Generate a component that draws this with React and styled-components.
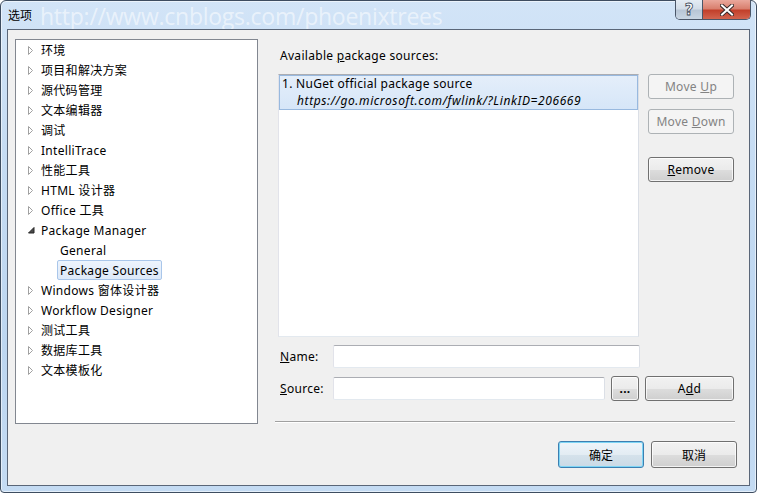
import React from 'react'
import styled, { createGlobalStyle, css } from 'styled-components'

const UI = '"Noto Sans", "Noto Sans CJK SC", sans-serif'

const GlobalStyle = createGlobalStyle`
  html, body { margin: 0; padding: 0; background: #fff; }
  body { font-family: ${UI}; font-size: 12px; letter-spacing: 0.3px; color: #000; }
  * { box-sizing: border-box; }
`

const treeItems = [
  { label: '环境' },
  { label: '项目和解决方案' },
  { label: '源代码管理' },
  { label: '文本编辑器' },
  { label: '调试' },
  { label: 'IntelliTrace' },
  { label: '性能工具' },
  { label: 'HTML 设计器' },
  { label: 'Office 工具' },
  { label: 'Package Manager', expanded: true },
  { label: 'General', depth: 1 },
  { label: 'Package Sources', depth: 1, selected: true },
  { label: 'Windows 窗体设计器' },
  { label: 'Workflow Designer' },
  { label: '测试工具' },
  { label: '数据库工具' },
  { label: '文本模板化' },
]

function Arrow({ expanded }) {
  if (expanded) {
    return (
      <svg width="7" height="7" viewBox="0 0 7 7">
        <polygon points="6,0.5 6,6 0.5,6" fill="#4a4a4a" stroke="#262626" strokeWidth="1" />
      </svg>
    )
  }
  return (
    <svg width="6" height="9" viewBox="0 0 6 9">
      <polygon points="0.5,0.5 4.5,4.5 0.5,8.5" fill="#fff" stroke="#a0a0a0" strokeWidth="1" />
    </svg>
  )
}

function App() {
  return (
    <>
      <GlobalStyle />
      <Frame>
        <TitleBar>
          <Title>选项</Title>
          <Watermark>http://www.cnblogs.com/phoenixtrees</Watermark>
          <Controls>
            <HelpBtn>?</HelpBtn>
            <CloseBtn>
              <svg width="14" height="12" viewBox="0 0 14 12">
                <path d="M2 1.5 L12 10.5 M12 1.5 L2 10.5" stroke="#3a2a2a" strokeWidth="4" strokeLinecap="square" />
                <path d="M2 1.5 L12 10.5 M12 1.5 L2 10.5" stroke="#fff" strokeWidth="2" strokeLinecap="square" />
              </svg>
            </CloseBtn>
          </Controls>
        </TitleBar>

        <Client>
          <TopRow>
            <Tree>
              {treeItems.map(item => (
                <TreeRow key={item.label} $depth={item.depth || 0}>
                  <Twisty>{!item.depth && <Arrow expanded={item.expanded} />}</Twisty>
                  <NodeLabel $selected={item.selected}>{item.label}</NodeLabel>
                </TreeRow>
              ))}
            </Tree>

            <Panel>
              <Caption>Available <u>p</u>ackage sources:</Caption>
              <ListRow>
                <SourceList>
                  <SourceItem $selected>
                    <SourceName>1. NuGet official package source</SourceName>
                    <SourceUrl>https://go.microsoft.com/fwlink/?LinkID=206669</SourceUrl>
                  </SourceItem>
                </SourceList>
                <SideButtons>
                  <Button disabled>Move <u>U</u>p</Button>
                  <Button disabled>Move <u>D</u>own</Button>
                  <Button $gap={23}><u>R</u>emove</Button>
                </SideButtons>
              </ListRow>

              <FieldRow>
                <FieldLabel><u>N</u>ame:</FieldLabel>
                <TextBox $w={307} readOnly />
              </FieldRow>
              <FieldRow>
                <FieldLabel><u>S</u>ource:</FieldLabel>
                <TextBox $w={272} readOnly />
                <Button $w={28} $bold>...</Button>
                <Button $w={89}>A<u>d</u>d</Button>
              </FieldRow>

              <Separator />
            </Panel>
          </TopRow>

          <BottomRow>
            <DialogButton $default>确定</DialogButton>
            <DialogButton>取消</DialogButton>
          </BottomRow>
        </Client>
      </Frame>
    </>
  )
}

const Frame = styled.div`
  width: 757px;
  height: 493px;
  display: flex;
  flex-direction: column;
  padding: 0 6px 6px;
  border: 1px solid #3e4d60;
  border-radius: 6px 6px 4px 4px;
  background: linear-gradient(180deg, #d2e4f7 0%, #c6dcf3 30%, #bdd6f0 70%, #c4dbf3 100%);
  box-shadow: inset 0 0 0 1px rgba(255, 255, 255, 0.55);
`

const TitleBar = styled.div`
  height: 28px;
  display: flex;
  align-items: flex-start;
  padding-left: 1px;
`

const Title = styled.span`
  font-family: "Noto Sans CJK SC", sans-serif;
  font-size: 12px;
  line-height: 28px;
  letter-spacing: 0;
  color: #000;
`

const Watermark = styled.span`
  margin-left: 8px;
  font-family: "Open Sans", sans-serif;
  font-size: 23px;
  line-height: 30px;
  letter-spacing: -0.25px;
  color: rgba(255, 255, 255, 0.55);
  white-space: nowrap;
`

const Controls = styled.div`
  margin-left: auto;
  margin-top: -1px;
  margin-right: -1px;
  display: flex;
  height: 20px;
  border: 1px solid #4a5668;
  border-top: none;
  border-radius: 0 0 5px 5px;
  overflow: hidden;
`

const HelpBtn = styled.div`
  width: 27px;
  display: flex;
  align-items: center;
  justify-content: center;
  border-right: 1px solid #4a5668;
  background: linear-gradient(180deg, #e4ecf4 0%, #d3dde8 45%, #b8c6d6 55%, #c9d6e3 100%);
  font-family: "DejaVu Sans", sans-serif;
  font-weight: bold;
  font-size: 15px;
  letter-spacing: 0;
  color: #fff;
  -webkit-text-stroke: 0.8px #3b4656;
`

const CloseBtn = styled.div`
  width: 47px;
  display: flex;
  align-items: center;
  justify-content: center;
  background: linear-gradient(180deg, #eaa89c 0%, #d9806f 45%, #c2402b 55%, #d2644f 100%);
`

const Client = styled.div`
  flex: 1;
  display: flex;
  flex-direction: column;
  padding: 9px 12px 17px 7px;
  border: 1px solid #5a6678;
  background: #f0f0f0;
`

const TopRow = styled.div`
  display: flex;
  height: 385px;
`

const Tree = styled.div`
  width: 243px;
  flex: none;
  border: 1px solid #828790;
  background: #fff;
`

const TreeRow = styled.div`
  display: flex;
  align-items: center;
  height: 20px;
  padding-left: ${p => 12 + p.$depth * 19}px;
  white-space: nowrap;
`

const Twisty = styled.span`
  width: 10px;
  flex: none;
  display: flex;
  align-items: center;
`

const NodeLabel = styled.span`
  display: inline-flex;
  align-items: center;
  height: 20px;
  padding: 0 2px;
  border: 1px solid transparent;
  border-radius: 2px;
  font-size: 12px;
  ${p => p.$selected && css`
    background: linear-gradient(180deg, #edf4fd 0%, #dde9f8 100%);
    border-color: #a9c6ea;
  `}
`

const Panel = styled.div`
  flex: 1;
  margin-left: 17px;
  padding-left: 3px;
  display: flex;
  flex-direction: column;
`

const Caption = styled.div`
  margin-top: 9px;
  padding-left: 2px;
  line-height: 16px;
`

const ListRow = styled.div`
  display: flex;
  margin-top: 10px;
`

const SourceList = styled.div`
  width: 361px;
  height: 263px;
  flex: none;
  border: 1px solid;
  border-color: #abadb3 #dbdfe6 #e3e9ef #e2e3ea;
  background: #fff;
`

const SourceItem = styled.div`
  height: 35px;
  padding: 0 2px;
  border: 1px solid transparent;
  ${p => p.$selected && css`
    background: linear-gradient(180deg, #e4eefa 0%, #d6e6f8 100%);
    border-color: #98b9df;
  `}
`

const SourceName = styled.div`
  line-height: 16px;
`

const SourceUrl = styled.div`
  padding-left: 15px;
  line-height: 17px;
  font-style: italic;
  letter-spacing: 0.6px;
`

const SideButtons = styled.div`
  margin-left: 9px;
  display: flex;
  flex-direction: column;
  gap: 10px;
`

const Button = styled.button`
  width: ${p => p.$w || 86}px;
  height: 25px;
  flex: none;
  margin-top: ${p => (p.$gap ? p.$gap - 10 : 0)}px;
  padding: 0;
  font-family: ${UI};
  font-size: 12px;
  letter-spacing: 0.3px;
  font-weight: ${p => (p.$bold ? 'bold' : 'normal')};
  color: #000;
  border: 1px solid #707070;
  border-radius: 3px;
  background: linear-gradient(180deg, #f2f2f2 0%, #ebebeb 50%, #dddddd 51%, #cfcfcf 100%);
  box-shadow: inset 0 0 0 1px rgba(255, 255, 255, 0.75);
  &:disabled {
    border-color: #adb2b5;
    background: #f4f4f4;
    color: #838383;
    box-shadow: none;
  }
`

const FieldRow = styled.div`
  display: flex;
  align-items: center;
  gap: 6px;
  height: 25px;
  margin-top: 7px;
  &:first-of-type { margin-top: 8px; }
`

const FieldLabel = styled.span`
  width: 49px;
  padding-left: 2px;
  flex: none;
`

const TextBox = styled.input`
  width: ${p => p.$w}px;
  height: 23px;
  flex: none;
  border: 1px solid;
  border-color: #abadb3 #dbdfe6 #e3e9ef #e2e3ea;
  border-radius: 2px;
  background: #fff;
  outline: none;
`

const Separator = styled.div`
  margin-top: auto;
  margin-left: -3px;
  margin-right: 2px;
  margin-bottom: 1px;
  border-top: 1px solid #a0a0a0;
  border-bottom: 1px solid #fff;
`

const BottomRow = styled.div`
  display: flex;
  justify-content: flex-end;
  gap: 7px;
  margin-top: 17px;
`

const DialogButton = styled.button`
  width: 86px;
  height: 27px;
  padding: 0;
  font-family: "Noto Sans CJK SC", sans-serif;
  font-size: 12px;
  letter-spacing: 0;
  color: #000;
  border: 1px solid #707070;
  border-radius: 3px;
  background: linear-gradient(180deg, #f2f2f2 0%, #ebebeb 50%, #dddddd 51%, #cfcfcf 100%);
  box-shadow: inset 0 0 0 1px rgba(255, 255, 255, 0.75);
  ${p => p.$default && css`
    border-color: #3c7fb1;
    background: linear-gradient(180deg, #eef5fa 0%, #e3ecf3 50%, #d5e2eb 51%, #cadae6 100%);
    box-shadow: inset 0 0 0 1px #7dd5f5;
  `}
`

export default App
